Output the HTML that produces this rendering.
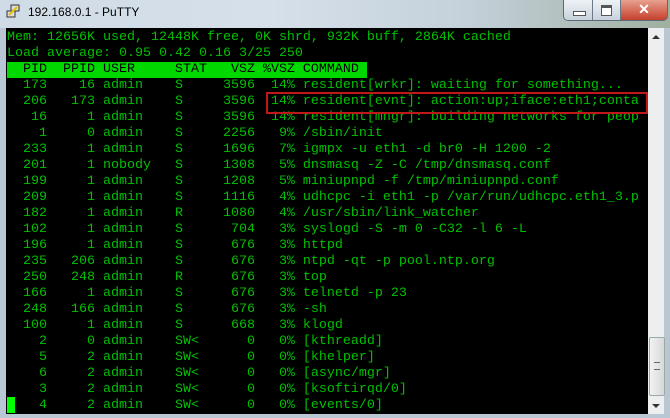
<!DOCTYPE html>
<html><head><style>
body{margin:0;width:670px;height:418px;overflow:hidden;background:#b9c6d3;font-family:"Liberation Sans",sans-serif;position:relative}
.tb{position:absolute;left:0;top:0;width:670px;height:28px;background:linear-gradient(90deg,#cfdbe6 0%,#d6e0ea 40%,#c4d0da 70%,#9fb0a0 100%)}
.title{position:absolute;left:28px;top:5px;font-size:12px;color:#000}
.icon{position:absolute;left:6px;top:4px;width:14px;height:14px}
.btns{position:absolute;left:563px;top:0;width:103px;height:20px;border:1px solid #5a6a7a;border-top:none;border-radius:0 0 5px 5px;overflow:hidden;display:flex}
.b{height:20px;background:linear-gradient(#eef2f6,#c8d2dc);border-right:1px solid #6a7a8a;position:relative}
.x{background:linear-gradient(#e8a090,#c4402c);flex:1}
.term{position:absolute;left:6px;top:28px;width:642px;height:386px;background:#000}
pre{margin:0;position:absolute;left:7px;top:30px;font-family:"Liberation Mono",monospace;font-size:13.33px;line-height:16px;color:#00c000}
.hd{background:#00d800;color:#000;display:inline-block}
.red{position:absolute;left:266px;top:92px;width:378px;height:18px;border:2px solid #c01818}
.sb{position:absolute;left:648px;top:28px;width:16px;height:386px;background:#eceef0}
.thumb{position:absolute;left:649px;top:337px;width:14px;height:57px;border:1px solid #9aa;border-radius:2px;background:linear-gradient(90deg,#f2f2f2,#d8d8d8)}
.cur{position:absolute;left:7px;top:397px;width:8px;height:16px;background:#00ff00}
</style></head><body>
<div class="tb"></div>
<svg class="icon" viewBox="0 0 14 14"><rect x="1" y="7" width="8" height="6" fill="#ddd" stroke="#333"/><rect x="5" y="1" width="8" height="6" fill="#ddd" stroke="#333"/><path d="M3 11 L11 3" stroke="#e8c000" stroke-width="2"/></svg>
<div class="title">192.168.0.1 - PuTTY</div>
<div class="btns"><div class="b" style="width:28px"><div style="position:absolute;left:9px;top:11px;width:11px;height:3px;background:#fff;border:1px solid #555"></div></div><div class="b" style="width:27px"><div style="position:absolute;left:8px;top:5px;width:9px;height:7px;border:1px solid #555;border-top-width:3px;background:#fff"></div></div><div class="x"><div style="color:#fff;font-weight:bold;font-size:14px;text-align:center;line-height:19px">✕</div></div></div>
<div class="term"></div>
<pre>Mem: 12656K used, 12448K free, 0K shrd, 932K buff, 2864K cached
Load average: 0.95 0.42 0.16 3/25 250
<span class="hd">  PID  PPID USER     STAT   VSZ %VSZ COMMAND </span>
  173    16 admin    S     3596  14% resident[wrkr]: waiting for something...
  206   173 admin    S     3596  14% resident[evnt]: action:up;iface:eth1;conta
   16     1 admin    S     3596  14% resident[mngr]: building networks for peop
    1     0 admin    S     2256   9% /sbin/init
  233     1 admin    S     1696   7% igmpx -u eth1 -d br0 -H 1200 -2
  201     1 nobody   S     1308   5% dnsmasq -Z -C /tmp/dnsmasq.conf
  199     1 admin    S     1208   5% miniupnpd -f /tmp/miniupnpd.conf
  209     1 admin    S     1116   4% udhcpc -i eth1 -p /var/run/udhcpc.eth1_3.p
  182     1 admin    R     1080   4% /usr/sbin/link_watcher
  102     1 admin    S      704   3% syslogd -S -m 0 -C32 -l 6 -L
  196     1 admin    S      676   3% httpd
  235   206 admin    S      676   3% ntpd -qt -p pool.ntp.org
  250   248 admin    R      676   3% top
  166     1 admin    S      676   3% telnetd -p 23
  248   166 admin    S      676   3% -sh
  100     1 admin    S      668   3% klogd
    2     0 admin    SW&lt;      0   0% [kthreadd]
    5     2 admin    SW&lt;      0   0% [khelper]
    6     2 admin    SW&lt;      0   0% [async/mgr]
    3     2 admin    SW&lt;      0   0% [ksoftirqd/0]
    4     2 admin    SW&lt;      0   0% [events/0]</pre>
<div class="red"></div>
<div class="cur"></div>
<div class="sb"></div>
<div style="position:absolute;left:652px;top:35px;border:4px solid transparent;border-bottom:4px solid #333;border-top:none"></div>
<div class="thumb"><div style="position:absolute;left:4px;top:24px;width:6px;height:6px;border-top:1px solid #666;border-bottom:1px solid #666"></div></div>
<div style="position:absolute;left:652px;top:404px;border:4px solid transparent;border-top:4px solid #333;border-bottom:none"></div>
</body></html>
